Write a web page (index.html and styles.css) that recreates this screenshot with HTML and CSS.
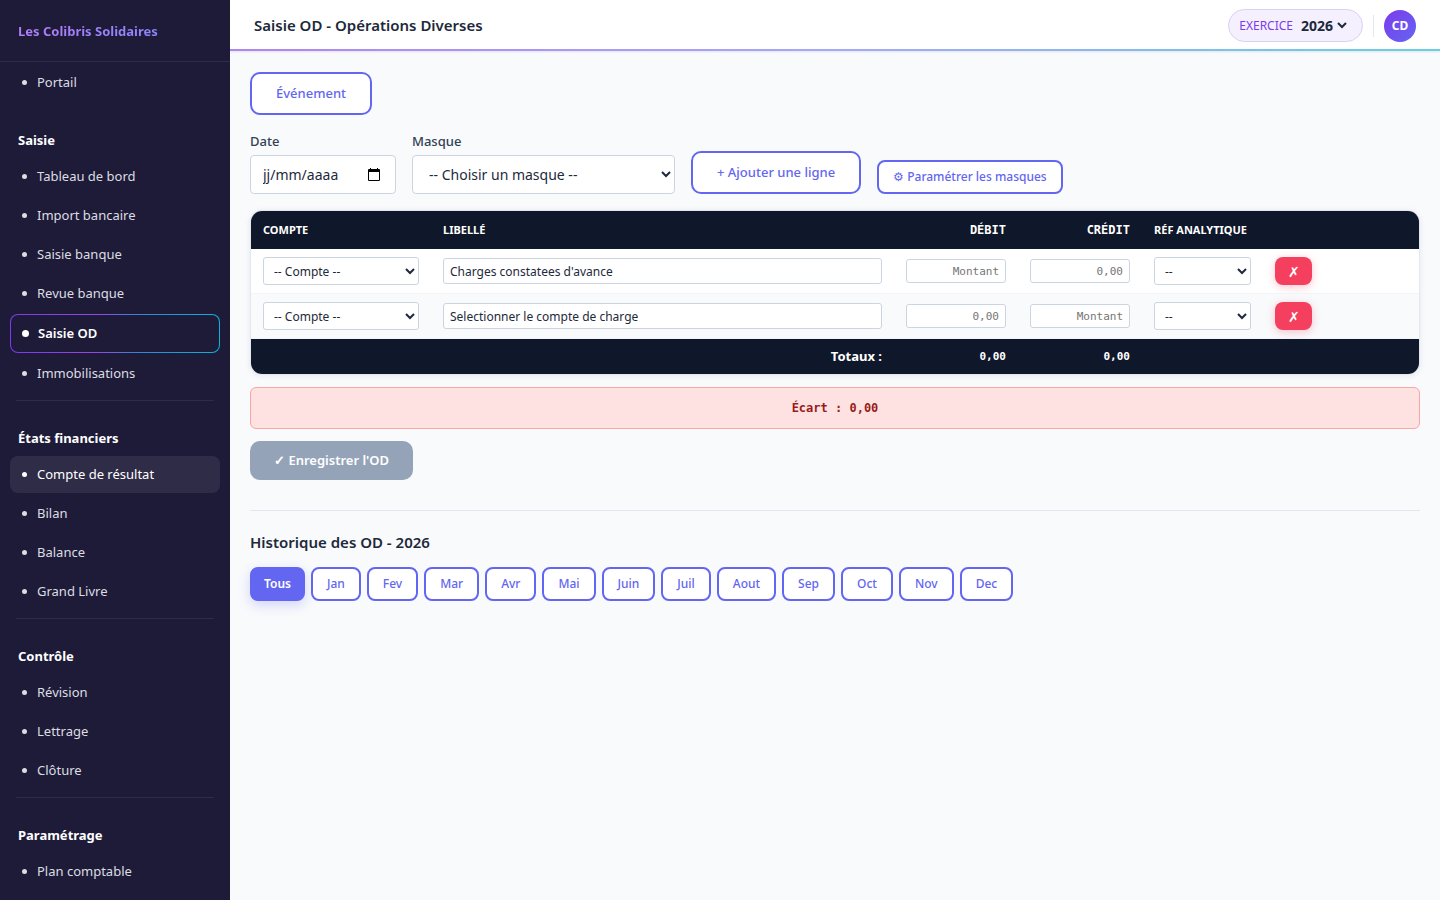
FILE: index.html
```html
<!DOCTYPE html>
<html lang="fr">
<head>
    <meta charset="UTF-8">
    <meta name="viewport" content="width=device-width, initial-scale=1.0">
    <title>Saisie OD - Les Colibris Solidaires</title>
    <link rel="stylesheet" href="styles.css">
</head>
<body>
    <aside class="sidebar">
        <div class="sidebar-brand"><span>Les Colibris Solidaires</span></div>

        <nav class="sidebar-nav">
            <a class="nav-item" href="#">Portail</a>

            <h2 class="nav-title">Saisie</h2>
            <a class="nav-item" href="#">Tableau de bord</a>
            <a class="nav-item" href="#">Import bancaire</a>
            <a class="nav-item" href="#">Saisie banque</a>
            <a class="nav-item" href="#">Revue banque</a>
            <a class="nav-item active" href="#">Saisie OD</a>
            <a class="nav-item" href="#">Immobilisations</a>
            <hr class="nav-divider">

            <h2 class="nav-title">États financiers</h2>
            <a class="nav-item hover" href="#">Compte de résultat</a>
            <a class="nav-item" href="#">Bilan</a>
            <a class="nav-item" href="#">Balance</a>
            <a class="nav-item" href="#">Grand Livre</a>
            <hr class="nav-divider">

            <h2 class="nav-title">Contrôle</h2>
            <a class="nav-item" href="#">Révision</a>
            <a class="nav-item" href="#">Lettrage</a>
            <a class="nav-item" href="#">Clôture</a>
            <hr class="nav-divider">

            <h2 class="nav-title">Paramétrage</h2>
            <a class="nav-item" href="#">Plan comptable</a>
        </nav>
    </aside>

    <div class="main">
        <header class="topbar">
            <h1>Saisie OD - Opérations Diverses</h1>
            <div class="topbar-right">
                <div class="exercice">
                    <label for="exercice">Exercice</label>
                    <select id="exercice">
                        <option>2026</option>
                    </select>
                </div>
                <div class="topbar-sep"></div>
                <button class="avatar" type="button">CD</button>
            </div>
        </header>

        <main class="content">
            <button class="btn btn-outline" type="button">Événement</button>

            <!-- Barre de saisie -->
            <div class="toolbar">
                <div class="field">
                    <label for="dateOD">Date</label>
                    <div class="date-box">
                        <input type="text" id="dateOD" placeholder="jj/mm/aaaa">
                        <svg width="12" height="13" viewBox="0 0 12 13" aria-hidden="true">
                            <path fill="#000" fill-rule="evenodd" d="M2 0h1v1h6V0h1v1h1a1 1 0 0 1 1 1v10a1 1 0 0 1-1 1H1a1 1 0 0 1-1-1V2a1 1 0 0 1 1-1h1zM1 4v8h10V4z"/>
                        </svg>
                    </div>
                </div>
                <div class="field">
                    <label for="masque">Masque</label>
                    <select id="masque">
                        <option>-- Choisir un masque --</option>
                    </select>
                </div>
                <button class="btn btn-outline" type="button">+ Ajouter une ligne</button>
                <button class="btn btn-outline btn-sm" type="button">⚙ Paramétrer les masques</button>
            </div>

            <!-- Lignes de l'écriture -->
            <div class="table-wrap">
                <table>
                    <colgroup>
                        <col class="col-compte">
                        <col>
                        <col class="col-montant">
                        <col class="col-montant">
                        <col class="col-ref">
                        <col class="col-action">
                    </colgroup>
                    <thead>
                        <tr>
                            <th>Compte</th>
                            <th>Libellé</th>
                            <th class="num">Débit</th>
                            <th class="num">Crédit</th>
                            <th>Réf analytique</th>
                            <th></th>
                        </tr>
                    </thead>
                    <tbody>
                        <tr>
                            <td><select aria-label="Compte"><option>-- Compte --</option></select></td>
                            <td><input type="text" aria-label="Libellé" value="Charges constatees d'avance"></td>
                            <td class="num"><input type="text" aria-label="Débit" placeholder="Montant"></td>
                            <td class="num"><input type="text" aria-label="Crédit" placeholder="0,00"></td>
                            <td><select aria-label="Réf analytique"><option>--</option></select></td>
                            <td><button class="btn-delete" type="button">✗</button></td>
                        </tr>
                        <tr>
                            <td><select aria-label="Compte"><option>-- Compte --</option></select></td>
                            <td><input type="text" aria-label="Libellé" value="Selectionner le compte de charge"></td>
                            <td class="num"><input type="text" aria-label="Débit" placeholder="0,00"></td>
                            <td class="num"><input type="text" aria-label="Crédit" placeholder="Montant"></td>
                            <td><select aria-label="Réf analytique"><option>--</option></select></td>
                            <td><button class="btn-delete" type="button">✗</button></td>
                        </tr>
                    </tbody>
                    <tfoot>
                        <tr>
                            <td class="total-label" colspan="2">Totaux :</td>
                            <td class="num">0,00</td>
                            <td class="num">0,00</td>
                            <td></td>
                            <td></td>
                        </tr>
                    </tfoot>
                </table>
            </div>

            <div class="ecart">Écart : 0,00</div>

            <button class="btn btn-save" type="button" disabled>✓ Enregistrer l'OD</button>

            <!-- Historique -->
            <section class="historique">
                <h2>Historique des OD - 2026</h2>
                <div class="mois">
                    <button class="btn btn-outline btn-sm selected" type="button">Tous</button>
                    <button class="btn btn-outline btn-sm" type="button">Jan</button>
                    <button class="btn btn-outline btn-sm" type="button">Fev</button>
                    <button class="btn btn-outline btn-sm" type="button">Mar</button>
                    <button class="btn btn-outline btn-sm" type="button">Avr</button>
                    <button class="btn btn-outline btn-sm" type="button">Mai</button>
                    <button class="btn btn-outline btn-sm" type="button">Juin</button>
                    <button class="btn btn-outline btn-sm" type="button">Juil</button>
                    <button class="btn btn-outline btn-sm" type="button">Aout</button>
                    <button class="btn btn-outline btn-sm" type="button">Sep</button>
                    <button class="btn btn-outline btn-sm" type="button">Oct</button>
                    <button class="btn btn-outline btn-sm" type="button">Nov</button>
                    <button class="btn btn-outline btn-sm" type="button">Dec</button>
                </div>
            </section>
        </main>
    </div>
</body>
</html>
```

FILE: styles.css
```css
* {
    margin: 0;
    padding: 0;
    box-sizing: border-box;
}

body {
    display: flex;
    height: 100vh;
    overflow: hidden;
    background: #f8fafc;
    color: #1e293b;
    font-family: "Segoe UI", "Noto Sans", sans-serif;
    font-size: 13px;
    line-height: 19px;
}

button, input, select {
    font-family: inherit;
    color: inherit;
}

/* Menu latéral */
.sidebar {
    flex: 0 0 230px;
    background: #1e1b39;
    overflow: hidden;
}

.sidebar-brand {
    padding: 22px 18px 20px;
    border-bottom: 1px solid #2f2c4a;
    font-weight: 700;
}

.sidebar-brand span {
    background: linear-gradient(90deg, #b47cf8, #8b86fa);
    background-clip: text;
    -webkit-background-clip: text;
    color: transparent;
}

.sidebar-nav {
    padding: 2px 10px;
}

.nav-item {
    display: flex;
    align-items: center;
    gap: 10px;
    margin-bottom: 2px;
    padding: 9px 12px;
    border-radius: 8px;
    color: #dddde1;
    text-decoration: none;
}

.nav-item::before {
    content: "";
    width: 5px;
    height: 5px;
    border-radius: 50%;
    background: currentColor;
}

.nav-item.hover,
.nav-item:hover {
    background: #2f2c48;
    color: #fff;
}

.nav-item.active {
    border: 1px solid transparent;
    background: linear-gradient(#1e1b39, #1e1b39) padding-box,
                linear-gradient(90deg, #7c3aed, #9a43ec 40%, #3b82d6 60%, #06b6d4) border-box;
    color: #fff;
    font-weight: 600;
    padding-left: 11px;
    gap: 9px;
}

.nav-item.active::before {
    width: 7px;
    height: 7px;
}

.nav-title {
    padding: 28px 8px 8px;
    color: #fff;
    font-size: 13px;
    font-weight: 700;
}

.nav-divider {
    margin: 8px 6px 0;
    border: none;
    border-top: 1px solid #2f2c4a;
}

/* Barre du haut */
.main {
    flex: 1;
    min-width: 0;
    overflow: auto;
}

.topbar {
    display: flex;
    align-items: center;
    justify-content: space-between;
    height: 51px;
    padding: 2px 24px 0;
    background: #fff;
    border-bottom: 2px solid;
    border-image: linear-gradient(90deg, #b084f5, #a5a8fb 50%, #67d0e0) 1;
    box-shadow: 0 1px 2px rgba(30, 27, 75, 0.1);
}

.topbar h1 {
    font-size: 15px;
    font-weight: 600;
}

.topbar-right {
    display: flex;
    align-items: center;
    gap: 10px;
}

.exercice {
    display: flex;
    align-items: center;
    gap: 4px;
    height: 33px;
    padding: 0 12px 0 10px;
    border: 1px solid #dccff6;
    border-radius: 17px;
    background: #f4f0fe;
}

.exercice label {
    color: #7c3aed;
    font-size: 12px;
    text-transform: uppercase;
}

.exercice select {
    border: none;
    background: transparent;
    font-size: 14px;
    font-weight: 700;
}

.topbar-sep {
    width: 1px;
    height: 22px;
    background: #e2e8f0;
}

.avatar {
    width: 32px;
    height: 32px;
    border: none;
    border-radius: 50%;
    background: linear-gradient(135deg, #7c3aed, #6366f1);
    color: #fff;
    font-size: 12px;
    font-weight: 700;
}

/* Contenu */
.content {
    padding: 21px 20px;
}

.btn {
    padding: 10px 24px;
    border: none;
    border-radius: 10px;
    font-size: 13px;
    font-weight: 600;
    line-height: 19px;
}

.btn-outline {
    border: 2px solid #6366f1;
    background: #fff;
    color: #6366f1;
    font-weight: 500;
}

.btn-sm {
    padding: 6px 14px;
    border-radius: 8px;
    font-size: 12px;
    line-height: 18px;
}

.btn-outline.selected {
    padding: 6px 12px;
    background: #6366f1;
    color: #fff;
    font-weight: 600;
    box-shadow: 0 4px 12px rgba(99, 102, 241, 0.25);
}

.toolbar {
    display: flex;
    align-items: flex-end;
    gap: 16px;
    margin: 17px 0 16px;
}

.field label {
    display: block;
    margin-bottom: 4px;
    color: #334155;
    font-weight: 500;
}

.date-box,
.field select {
    height: 39px;
    border: 1px solid #cbd5e1;
    border-radius: 4px;
    background: #fff;
    font-size: 14px;
}

.date-box {
    display: flex;
    align-items: center;
    width: 146px;
    padding: 0 15px 0 12px;
}

.date-box input {
    flex: 1;
    min-width: 0;
    border: none;
    outline: none;
    font-size: 14px;
}

.date-box input::placeholder {
    color: #1e293b;
}

.field select {
    width: 263px;
    padding: 0 0 0 12px;
}

/* Tableau */
.table-wrap {
    border: 1px solid #e2e8f0;
    border-radius: 12px;
    background: #fff;
    overflow: hidden;
    box-shadow: 0 1px 6px rgba(30, 27, 75, 0.08);
}

table {
    width: 100%;
    border-collapse: separate;
    border-spacing: 0;
    table-layout: fixed;
}

.col-compte {
    width: 180px;
}

.col-montant {
    width: 124px;
}

.col-ref {
    width: 121px;
}

.col-action {
    width: 156px;
}

th {
    height: 38px;
    padding: 0 12px 2px;
    background: #0f172a;
    color: #fff;
    font-size: 11px;
    font-weight: 700;
    text-align: left;
    text-transform: uppercase;
    white-space: nowrap;
}

td {
    height: 45px;
    padding: 0 12px;
}

tbody td {
    border-bottom: 1px solid #f1f5f9;
}

tbody tr:nth-child(even) {
    background: #f8fafc;
}

.num {
    font-family: Consolas, "DejaVu Sans Mono", monospace;
    text-align: right;
}

th.num {
    padding-bottom: 0;
    font-size: 12px;
}

td.num {
    font-size: 11px;
}

td input,
td select {
    display: block;
    width: 100%;
    border: 1px solid #cbd5e1;
    border-radius: 3px;
    background: #fff;
    font-size: 12px;
}

td input {
    height: 26px;
    padding: 0 6px;
}

td select {
    height: 28px;
    padding: 0 0 0 6px;
}

.num input {
    height: 24px;
    font-family: inherit;
    font-size: 11px;
    text-align: right;
}

.btn-delete {
    display: block;
    width: 37px;
    height: 28px;
    border: none;
    border-radius: 8px;
    background: #f43f5e;
    color: #fff;
    font-size: 14px;
    font-weight: 500;
    box-shadow: 0 2px 8px rgba(244, 63, 94, 0.3);
}

tfoot td {
    height: 35px;
    background: #0f172a;
    color: #fff;
    font-weight: 700;
}

.total-label {
    text-align: right;
}

.ecart {
    margin: 12px 0;
    padding: 10px;
    border: 1px solid #fca5a5;
    border-radius: 6px;
    background: #fee2e2;
    color: #991b1b;
    font-family: Consolas, "DejaVu Sans Mono", monospace;
    font-size: 12px;
    font-weight: 700;
    line-height: 20px;
    text-align: center;
}

.btn-save {
    background: #94a3b8;
    color: #fff;
}

.historique {
    margin-top: 30px;
    padding-top: 22px;
    border-top: 1px solid #e2e8f0;
}

.historique h2 {
    margin-bottom: 15px;
    font-size: 15px;
    font-weight: 600;
}

.mois {
    display: flex;
    flex-wrap: wrap;
    gap: 6px;
}
```
